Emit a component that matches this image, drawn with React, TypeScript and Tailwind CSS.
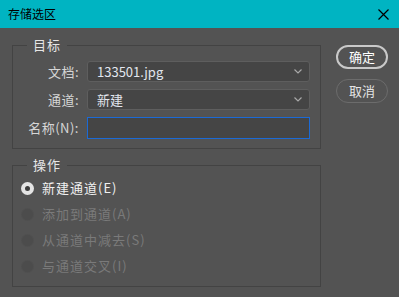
import React from 'react';

const font = { fontFamily: '"Noto Sans CJK SC", "Noto Sans", sans-serif' };

const Chevron = () => (
    <svg width="8" height="5" viewBox="0 0 8 5" className="shrink-0">
        <path d="M0.5 0.5 L4 4 L7.5 0.5" fill="none" stroke="#a8a8a8" strokeWidth="1.2" />
    </svg>
);

const Group: React.FC<{ title: string; className: string; children: React.ReactNode }> = ({ title, className, children }) => (
    <div className={`relative border border-[#434343] ${className}`}>
        <span className="absolute -top-[10px] left-[14px] px-[6px] bg-[#535353] text-[13px] leading-[18px] tracking-[1px] text-[#e6e6e6]">
            {title}
        </span>
        {children}
    </div>
);

const Row: React.FC<{ label: string; children: React.ReactNode }> = ({ label, children }) => (
    <div className="flex items-center">
        <div className="w-[66px] text-right text-[13px] tracking-[0.5px] text-[#d6d6d6]">{label}</div>
        <div className="ml-[8px] w-[223px]">{children}</div>
    </div>
);

const Select: React.FC<{ value: string }> = ({ value }) => (
    <div className="h-[21px] flex items-center justify-between pl-[9px] pr-[7px] rounded-[3px] border border-[#5e5e5e] bg-[#454545] text-[13px] text-[#e2e6ee]">
        <span>{value}</span>
        <Chevron />
    </div>
);

const Radio: React.FC<{ label: string; checked?: boolean }> = ({ label, checked }) => (
    <div className="h-[26px] flex items-center gap-[8px]">
        {checked ? (
            <div className="w-[13px] h-[13px] rounded-full bg-[#e4e4e4] flex items-center justify-center">
                <div className="w-[5px] h-[5px] rounded-full bg-[#3c3c3c]" />
            </div>
        ) : (
            <div className="w-[13px] h-[13px] rounded-full bg-[#4c4c4c] border border-[#505050]" />
        )}
        <span className={`text-[13px] tracking-[1px] ${checked ? 'text-[#f0f0f0]' : 'text-[#7a7a7a]'}`}>{label}</span>
    </div>
);

export default function App() {
    return (
        <div className="w-[399px] h-[297px] bg-[#535353] flex flex-col overflow-hidden" style={font}>
            <div className="h-[28px] shrink-0 bg-[#00b4c2] flex items-center justify-between pl-[8px] pr-[10px]">
                <span className="text-[12px] text-black">存储选区</span>
                <svg width="11" height="11" viewBox="0 0 11 11">
                    <path d="M0.5 0.5 L10.5 10.5 M10.5 0.5 L0.5 10.5" stroke="#000" strokeWidth="1.2" />
                </svg>
            </div>
            <div className="flex pl-[12px] pt-[17px]">
                <div className="flex flex-col gap-[16px]">
                    <Group title="目标" className="w-[309px] h-[104px] pt-[15px] flex flex-col gap-[7px]">
                        <Row label="文档:"><Select value="133501.jpg" /></Row>
                        <Row label="通道:"><Select value="新建" /></Row>
                        <Row label="名称(N):">
                            <div className="h-[22px] border border-[#1b6ad6] bg-[#454545]" />
                        </Row>
                    </Group>
                    <Group title="操作" className="w-[309px] h-[122px] pt-[9px] pl-[8px]">
                        <Radio label="新建通道(E)" checked />
                        <Radio label="添加到通道(A)" />
                        <Radio label="从通道中减去(S)" />
                        <Radio label="与通道交叉(I)" />
                    </Group>
                </div>
                <div className="ml-[15px] flex flex-col gap-[10px]">
                    <button className="w-[52px] h-[24px] rounded-full border-2 border-[#c9c9c9] text-[13px] text-white flex items-center justify-center">
                        确定
                    </button>
                    <button className="w-[52px] h-[24px] rounded-full border border-[#6c6c6c] text-[13px] text-[#e4e4e4] flex items-center justify-center">
                        取消
                    </button>
                </div>
            </div>
        </div>
    );
}
